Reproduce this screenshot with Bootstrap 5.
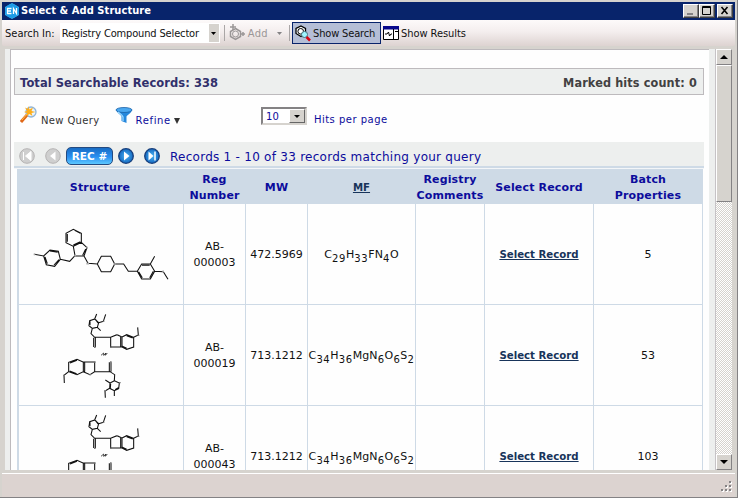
<!DOCTYPE html>
<html lang="en">
<head>
<meta charset="utf-8">
<title>Select &amp; Add Structure</title>
<link href="https://cdn.jsdelivr.net/npm/bootstrap@5.3.0/dist/css/bootstrap.min.css" rel="stylesheet">
<style>
body{margin:0;font:11px/16px "DejaVu Sans",Verdana,sans-serif;color:#111;overflow:hidden}
svg{display:block;flex:none}
span,a,b{white-space:nowrap}
.win{width:738px;height:498px;background:#d6d3ce;border-right:1px solid #848284;border-bottom:1px solid #848284;padding:2px 2px 0 2px}
.ui{font-family:"DejaVu Sans Condensed","DejaVu Sans",sans-serif;font-stretch:condensed}
.titlebar{height:18px;background:#08246b;color:#fff;padding:0 2px}
.titlebar b{margin-left:1px;letter-spacing:.08px}
.wbtn{width:16px;height:14px;background:#d6d3ce;border:1px solid;border-color:#fff #404040 #404040 #fff;box-shadow:inset -1px -1px #848284}
.wmax{margin-right:2px}
.tools{height:26px;background:linear-gradient(#fdfafa,#f4eeee 45%,#ddd3d1);border-radius:0 0 2px 2px;color:#111}
.tools span{padding-top:1px}
.combo{width:160px;height:20px;background:#fff;margin-left:5px;padding:0 1px 0 2px}
.combo-arrow{width:10px;height:18px;background:#d6d3ce}
.vline{width:1px;height:16px;background:#aaa6a6}
.show-on{width:89px;height:22px;background:#b5bed6;border:1px solid #08246b;padding-left:1px}
.view{margin:3px 1px 0 3px;height:421px;overflow:hidden}
.strip-l{width:5px;background:#edefee}
.strip-r{width:6px;background:#edefee}
.page-area{width:699px;background:#fefefe;border-top:1px solid #bdbabd;border-left:1px solid #bdbabd;padding:18px 0 0 3px;overflow:hidden}
.totals{width:690px;height:27px;border:1px solid #bdbabd;background:#edefee;padding:3px 6px 0 5px;font-size:12px;font-weight:bold}
.totals .t1{color:#31306b;font-size:11.5px;letter-spacing:.06px}
.totals .t2{color:#424142;font-family:"DejaVu Sans Condensed","DejaVu Sans",sans-serif;font-stretch:condensed;font-size:12.5px;letter-spacing:.15px}
.actions{width:690px;height:47px;color:#0c0c9c}
.hits{width:46px;height:18px;background:#fff;border:2px solid;border-color:#848284 #d6d3ce #d6d3ce #848284;padding-left:3px;line-height:15px;font-size:10px;letter-spacing:.3px}
.hits-arrow{width:16px;height:14px;background:#d6d3ce;border:1px solid;border-color:#fff #666 #666 #fff}
.pager{width:690px;height:24px;background:#edefee;color:#0c0c9c}
.pager svg,.rec{margin-top:4px}
.pager-rule{width:690px;height:3px;background:#cedae6;border-bottom:1px solid #f4f6f8}
.rec{width:47px;height:18px;border-radius:5px;border:1px solid #234a80;background:linear-gradient(#186cc4,#2a8ef0 55%,#5cc8ff);color:#fff;font-weight:bold;font-size:10.5px;line-height:17px}
.rtable{width:686px;margin-left:3px;table-layout:fixed;border-collapse:separate;border-spacing:0}
.rtable th{height:35px;padding:3px 1px 0 0;background:#cedae6;color:#0c0c9c;text-align:center;vertical-align:middle;line-height:16px;letter-spacing:.15px;white-space:nowrap}
.rtable td{height:101px;padding:2px 0 0;border-right:1px solid #cedae6;border-bottom:1px solid #cedae6;text-align:center;vertical-align:middle}
.rtable td:first-child{border-left:2px solid #cedae6;padding:0}
.rtable a,.rtable th u{color:#18345a;font-weight:bold;font-size:10.2px;letter-spacing:0}
.rtable sub{font-size:10px;bottom:-4px;line-height:0;letter-spacing:.6px}
.rtable .mf{letter-spacing:.1px;white-space:nowrap;padding:1px 0 0}
.sbar{width:17px;border-left:1px solid #c6c3c6;background:repeating-conic-gradient(#fff 0 25%,#d6d3ce 0 50%) 0 0/2px 2px}
.sbtn{height:16px;background:#d6d3ce;border:1px solid;border-color:#fff #848284 #848284 #fff}
.thumb{height:137px;background:#d6d3ce;border:1px solid;border-color:#fff #848284 #848284 #fff}
.status{margin-top:3px;height:24px;background:#dcd3d0;border-top:1px solid #fff;padding:0 2px 4px 0}
.s-in{margin-left:3px}.s-combo{letter-spacing:-.15px}
.s-add{margin-left:3px;color:#9a9696;letter-spacing:.4px}.s-dd{margin-left:9px}.s-v2{margin:0 2px 0 7px}
.s-ss{margin-left:2px;letter-spacing:-.15px}.s-ri{margin-left:2px}.s-sr{margin-left:2px;letter-spacing:-.05px}
.a-wand{margin:11px 0 0 6px}.s-nq{margin:18px 0 0 3px;font-size:10px;letter-spacing:.35px;color:#333}
.a-fun{margin:12px 0 0 15px}.s-rf{margin:18px 0 0 3px;font-size:10px;letter-spacing:.65px}.a-tri{margin:23px 0 0 3px}
.a-hits{margin:12px 0 0 81px}.s-hp{margin:17px 0 0 7px;font-size:10px;letter-spacing:.5px}
.p1{margin-left:5px}.p2{margin:0 5px 0 10px}.p3{margin-left:5px}.p4{margin:0 10px}
.s-rec{font-size:12px;letter-spacing:.26px;padding-top:5px}
</style>
<script src="https://cdn.jsdelivr.net/npm/bootstrap@5.3.0/dist/js/bootstrap.bundle.min.js"></script>
</head>
<body>
<svg width="0" height="0" class="position-absolute">
<defs>
<g id="molA" fill="none" stroke="#111" stroke-width="3.2">
<path d="M73 148L101 153L120 135L145 139L151 163L134 184L109 179L101 153M120 138L143 142M147 164L132 180M112 176L105 156M151 163L179 169L195 152L190 124L168 113L168 85L190 73L214 85L214 112L190 124M194 76L211 85M172 110V87M211 110L190 120M214 112L231 128L222 153L195 152M227 132L218 151M222 153L234 175L262 177L274 154H302L314 177L302 200H274L262 177M314 177H341L355 199H382L395 177H421L434 199L421 222H395L382 199M396 181H419M430 199L419 218M397 218L386 200M421 177L434 154M434 199L460 200L474 223"/>
<path stroke="#aaa" stroke-width="5" d="M71 148h5M193 152h5M229 128h5M229 176h8M311 177h6M457 199h5"/>
</g>
<g id="molB" fill="none" stroke="#111" stroke-width="3.2">
<path d="M260 33L254 48L239 53L237 68L247 76L262 73L266 59L254 48M257 50L264 60M240 55L240 67M266 59L280 55L287 34M262 73L272 83M247 76L243 92L254 103H302L321 95L336 102V132H302V103M251 104V132M256 104V132M332 102V132M336 102L350 95L371 103V132L350 139L336 132M350 98L368 105M350 136L337 130M371 103L385 96L383 73"/>
<path stroke-width="2.2" d="M273 157L281 150L281 157L288 150L286 157L292 150"/>
<path d="M254 177H219L201 169L176 178V206L201 215L220 206V177M201 172L180 180M200 212L179 204M224 178V206M220 206L240 215L254 206V177M254 206H300L314 215L313 233L328 240L326 257L313 263L299 256L300 240L313 233M298 206V178M303 206V178M302 242L301 256M315 260L325 254M176 206L162 217L163 240M300 240L286 231M299 256L285 264L286 284M313 263V279"/>
<path stroke="#777" stroke-width="4" d="M252 133h5M300 133h5M319 95h5M383 97h5M252 177h5M300 177h5M238 215h5M160 217h5M283 263h5M278 55h5M327 239h5M235 67h5"/>
</g>
<radialGradient id="gb"><stop offset="0" stop-color="#4ab4f4"/><stop offset="1" stop-color="#1468c0"/></radialGradient>
</defs></svg>
<div class="win">
  <div class="titlebar ui d-flex align-items-center">
    <svg width="16" height="16" viewBox="0 0 16 16"><path d="M8 0l7 4v8l-7 4-7-4V4z" fill="#35b4f4"/><circle cx="8" cy="8" r="7" fill="#1d9ce8"/><path d="M7.500 5.500h-4v5h4M3.500 8h3.500M9.500 11V5.500l3 5V5" stroke="#fff" stroke-width="1.300" fill="none"/></svg>
    <b>Select &amp; Add Structure</b>
    <div class="d-flex ms-auto">
      <div class="wbtn"><svg width="14" height="12"><path d="M3 9h6" stroke="#848284" stroke-width="2"/></svg></div>
      <div class="wbtn wmax"><svg width="14" height="12"><path d="M2.500 1.500h8v8h-8zM2 2.500h9" stroke="#000" fill="none"/></svg></div>
      <div class="wbtn"><svg width="14" height="12"><path d="M3.500 2l6 7M9.500 2l-6 7" stroke="#000" stroke-width="1.600"/></svg></div>
    </div>
  </div>
  <div class="tools ui d-flex align-items-center">
    <span class="s-in">Search In:</span>
    <div class="combo d-flex align-items-center justify-content-between"><span class="s-combo">Registry Compound Selector</span>
      <div class="combo-arrow d-flex align-items-center justify-content-center"><svg width="5" height="3"><path d="M0 0h5L2.500 3z"/></svg></div></div>
    <div class="vline ms-1"></div>
    <svg class="ms-1" width="16" height="18" fill="none" stroke="#9a9696"><path d="M6.500 4.500l5 3v5l-5 3-5-3v-5z" stroke-width="1.500"/><circle cx="6.500" cy="10" r="3"/><path d="M1 3h6M4 0v6M11 10h5M14 8v4" stroke-width="1.500"/></svg>
    <span class="s-add">Add</span>
    <svg class="s-dd" width="5" height="3"><path d="M0 0h5L2.500 3z" fill="#848284"/></svg>
    <div class="vline s-v2"></div>
    <div class="show-on d-flex align-items-center">
      <svg width="17" height="18" viewBox="0 0 17 18"><path d="M7 2l4.500 2.500v5L7 12.500l-5-3v-5z" fill="#fff" stroke="#000" stroke-width="1.300"/><circle cx="6.700" cy="7.300" r="2.800" fill="none" stroke="#000"/><circle cx="10.500" cy="10.500" r="3" fill="#9ff4ff" stroke="#46707c"/><path d="M12.500 13l3.500 3.500" stroke="#d80010" stroke-width="2.500"/></svg>
      <span class="s-ss">Show Search</span>
    </div>
    <svg width="16" height="14" class="s-ri"><path d="M.5.5h15v13H.5z" fill="#fff" stroke="#000"/><path d="M0 0h16v3.500H0z" fill="#08088c"/><path d="M10.500 3v10M2 8h2l1.500-2 1 4L8 8h1M12 5.500h3" stroke="#000" fill="none"/></svg>
    <span class="s-sr">Show Results</span>
  </div>
  <div class="view d-flex">
    <div class="strip-l"></div>
    <div class="page-area">
      <div class="totals d-flex justify-content-between align-items-center"><span class="t1">Total Searchable Records: 338</span><span class="t2">Marked hits count: 0</span></div>
      <div class="actions d-flex">
        <svg width="18" height="18" class="a-wand" viewBox="0 0 18 18"><circle cx="11" cy="6" r="5" fill="#e8f3fc" stroke="#8fb4d8" stroke-width="1.300"/><path d="M1 16l6-7" stroke="#e06818" stroke-width="3"/><path d="M2 14l5-6" stroke="#ffc04a" stroke-width="1"/><path d="M8.500 0l1 3.500L13 1.500l-1.500 3.500 4 1-4 1 1 3-3-2-3 2 .5-3-3-1 3-1L5 1.500l3 1.500z" fill="#ffae18"/></svg>
        <span class="s-nq">New Query</span>
        <svg width="18" height="17" class="a-fun" viewBox="0 0 18 17"><path d="M1 2.500c1 4 5 5 5.500 7V14l5 2V9.500c1-2 5-3 5.500-7z" fill="#2688dc"/><ellipse cx="9" cy="3" rx="8" ry="2.500" fill="#4aa8f0" stroke="#1a62a8" stroke-width=".8"/><path d="M3 5c2 2 4.500 3 5 5v4" stroke="#9ad8ff" stroke-width="1.300" fill="none"/></svg>
        <span class="s-rf">Refine</span>
        <svg width="6" height="6" class="a-tri"><path d="M0 0h6L3 6z" fill="#333"/></svg>
        <div class="hits d-flex justify-content-between a-hits"><span>10</span><div class="hits-arrow d-flex align-items-center justify-content-center"><svg width="6" height="3"><path d="M0 0h6L3 3z"/></svg></div></div>
        <span class="s-hp">Hits per page</span>
      </div>
      <div class="pager d-flex align-items-center">
        <svg width="16" height="18" class="p1" viewBox="0 0 16 18"><circle cx="8" cy="9" r="7.300" fill="#cfcfcf" stroke="#b5b3b3"/><path d="M12 4.500v9L6.500 9zM4.500 5v8" fill="#fff" stroke="#fff" stroke-width="1"/></svg>
        <svg width="16" height="18" class="p2" viewBox="0 0 16 18"><circle cx="8" cy="9" r="7.300" fill="#cfcfcf" stroke="#b5b3b3"/><path d="M10.500 4.500v9L5 9z" fill="#fff"/></svg>
        <div class="rec text-center">REC #</div>
        <svg width="16" height="18" class="p3" viewBox="0 0 16 18"><circle cx="8" cy="9" r="7.300" fill="url(#gb)" stroke="#173f7c" stroke-width="1.300"/><path d="M6 4.500v9L11.500 9z" fill="#fff"/></svg>
        <svg width="16" height="18" class="p4" viewBox="0 0 16 18"><circle cx="8" cy="9" r="7.300" fill="url(#gb)" stroke="#173f7c" stroke-width="1.300"/><path d="M4.500 4.500v9L9.500 9z" fill="#fff"/><path d="M11 4.500v9" stroke="#fff" stroke-width="1.500"/></svg>
        <span class="s-rec">Records 1 - 10 of 33 records matching your query</span>
      </div>
      <div class="pager-rule"></div>
      <table class="rtable">
        <colgroup><col width="167"><col width="62"><col width="62"><col width="108"><col width="69"><col width="109"><col width="109"></colgroup>
        <tr><th>Structure</th><th>Reg<br>Number</th><th>MW</th><th><u>MF</u></th><th>Registry<br>Comments</th><th>Select Record</th><th>Batch<br>Properties</th></tr>
        <tr><td><svg width="164" height="100" viewBox="27 -3 492 300"><use href="#molA"/></svg></td><td>AB-<br>000003</td><td>472.5969</td><td class="mf">C<sub>29</sub>H<sub>33</sub>FN<sub>4</sub>O</td><td></td><td><a href="#">Select Record</a></td><td>5</td></tr>
        <tr><td><svg width="164" height="100" viewBox="27 6 492 300"><use href="#molB"/></svg></td><td>AB-<br>000019</td><td>713.1212</td><td class="mf">C<sub>34</sub>H<sub>36</sub>MgN<sub>6</sub>O<sub>6</sub>S<sub>2</sub></td><td></td><td><a href="#">Select Record</a></td><td>53</td></tr>
        <tr><td><svg width="164" height="100" viewBox="27 6 492 300"><use href="#molB"/></svg></td><td>AB-<br>000043</td><td>713.1212</td><td class="mf">C<sub>34</sub>H<sub>36</sub>MgN<sub>6</sub>O<sub>6</sub>S<sub>2</sub></td><td></td><td><a href="#">Select Record</a></td><td>103</td></tr>
      </table>
    </div>
    <div class="strip-r"></div>
    <div class="sbar d-flex flex-column">
      <div class="sbtn d-flex align-items-center justify-content-center"><svg width="8" height="4"><path d="M0 4h8L4 0z"/></svg></div>
      <div class="thumb"></div>
      <div class="sbtn mt-auto d-flex align-items-center justify-content-center"><svg width="8" height="4"><path d="M0 0h8L4 4z"/></svg></div>
    </div>
  </div>
  <div class="status d-flex justify-content-end align-items-end"><svg width="12" height="12" fill="#848284"><path d="M8 0h2v2H8zM8 4h2v2H8zM4 4h2v2H4zM8 8h2v2H8zM4 8h2v2H4zM0 8h2v2H0z"/><path d="M10 1h1v2H9V2h1zM10 5h1v2H9V6h1zM6 5h1v2H5V6h1zM10 9h1v2H9v-1h1zM6 9h1v2H5v-1h1zM2 9h1v2H1v-1h1z" fill="#fff"/></svg></div>
</div>
</body>
</html>
